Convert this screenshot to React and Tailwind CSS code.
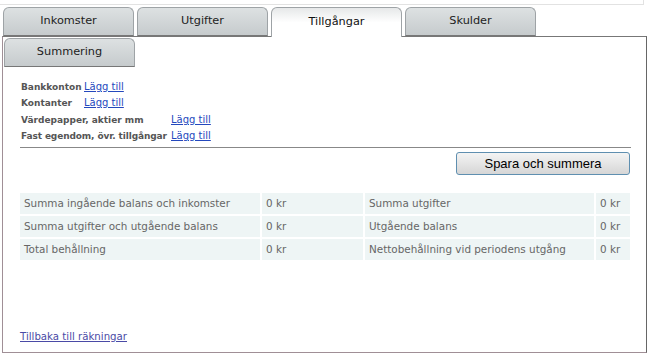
import React from 'react';

const tabs = ['Inkomster', 'Utgifter', 'Tillgångar', 'Skulder'];

function Tab({ label, active }) {
  return (
    <div
      className={
        active
          ? 'relative z-10 w-[131px] h-[30px] -mb-px rounded-t-[6px] border border-b-0 border-[#9ea3a6] bg-gradient-to-b from-[#e6e8e9] via-white to-white flex items-center justify-center text-[11.3px] text-[#111]'
          : 'w-[131px] h-[29px] rounded-t-[6px] border border-[#9ea3a6] border-b-[#777] bg-gradient-to-b from-[#dde1e2] to-[#c6cbcd] flex items-center justify-center text-[11.3px] text-[#222]'
      }
    >
      {label}
    </div>
  );
}

function AddRow({ label, width, tight }) {
  return (
    <div className="flex h-[16px] items-baseline pt-[2px] whitespace-nowrap ml-px">
      <span className={`${width} ${tight ? 'tracking-[-0.12px]' : ''} font-bold text-[9px] text-[#555]`}>{label}</span>
      <a href="#" className="text-[10px] text-[#2448bd] underline">Lägg till</a>
    </div>
  );
}

const summary = [
  ['Summa ingående balans och inkomster', '0 kr', 'Summa utgifter', '0 kr'],
  ['Summa utgifter och utgående balans', '0 kr', 'Utgående balans', '0 kr'],
  ['Total behållning', '0 kr', 'Nettobehållning vid periodens utgång', '0 kr'],
];

export default function App() {
  return (
    <div className="w-[648px] h-[353px] bg-white overflow-hidden font-['DejaVu_Sans',Verdana,sans-serif]">
      <div className="h-[5px] mr-[4px] border-b border-r border-[#e2e2e2]" />
      <div className="flex gap-[3px] pl-[3px] pt-[2px]">
        {tabs.map((t) => (
          <Tab key={t} label={t} active={t === 'Tillgångar'} />
        ))}
      </div>
      <div className="ml-[2px] w-[645px] h-[317px] border border-t-[#777] border-l-[#a08f96] border-r-[#666] border-b-[#a08f96]">
        <div className="pl-px pt-px">
          <Tab label="Summering" />
        </div>
        <div className="pl-[17px] pr-[15px] pt-[10px]">
          <AddRow label="Bankkonton" width="w-[63px]" />
          <AddRow label="Kontanter" width="w-[63px]" />
          <div className="h-px" />
          <AddRow label="Värdepapper, aktier mm" width="w-[150px]" />
          <AddRow label="Fast egendom, övr. tillgångar" width="w-[150px]" tight />
          <div className="mt-[5px] border-t border-[#888]" />
          <div className="flex justify-end mt-[4px] pr-px">
            <button
              type="button"
              className="w-[174px] h-[23px] rounded-[3px] border border-[#5f8fb0] bg-gradient-to-b from-[#f4f4f4] to-[#d6d6d6] font-['Liberation_Sans',Arial,sans-serif] text-[13px] text-black"
            >
              Spara och summera
            </button>
          </div>
          <div className="mt-[18px] grid grid-cols-[240px_101px_229px_34px] gap-[2px] text-[10.4px] text-[#666]">
            {summary.map((row, i) =>
              row.map((cell, j) => (
                <div key={`${i}-${j}`} className="h-[21px] bg-[#eef5f5] flex items-center pl-[4px] whitespace-nowrap">
                  {cell}
                </div>
              ))
            )}
          </div>
          <div className="mt-[69px] text-[10.2px]">
            <a href="#" className="text-[#4a4aa6] underline">Tillbaka till räkningar</a>
          </div>
        </div>
      </div>
    </div>
  );
}
